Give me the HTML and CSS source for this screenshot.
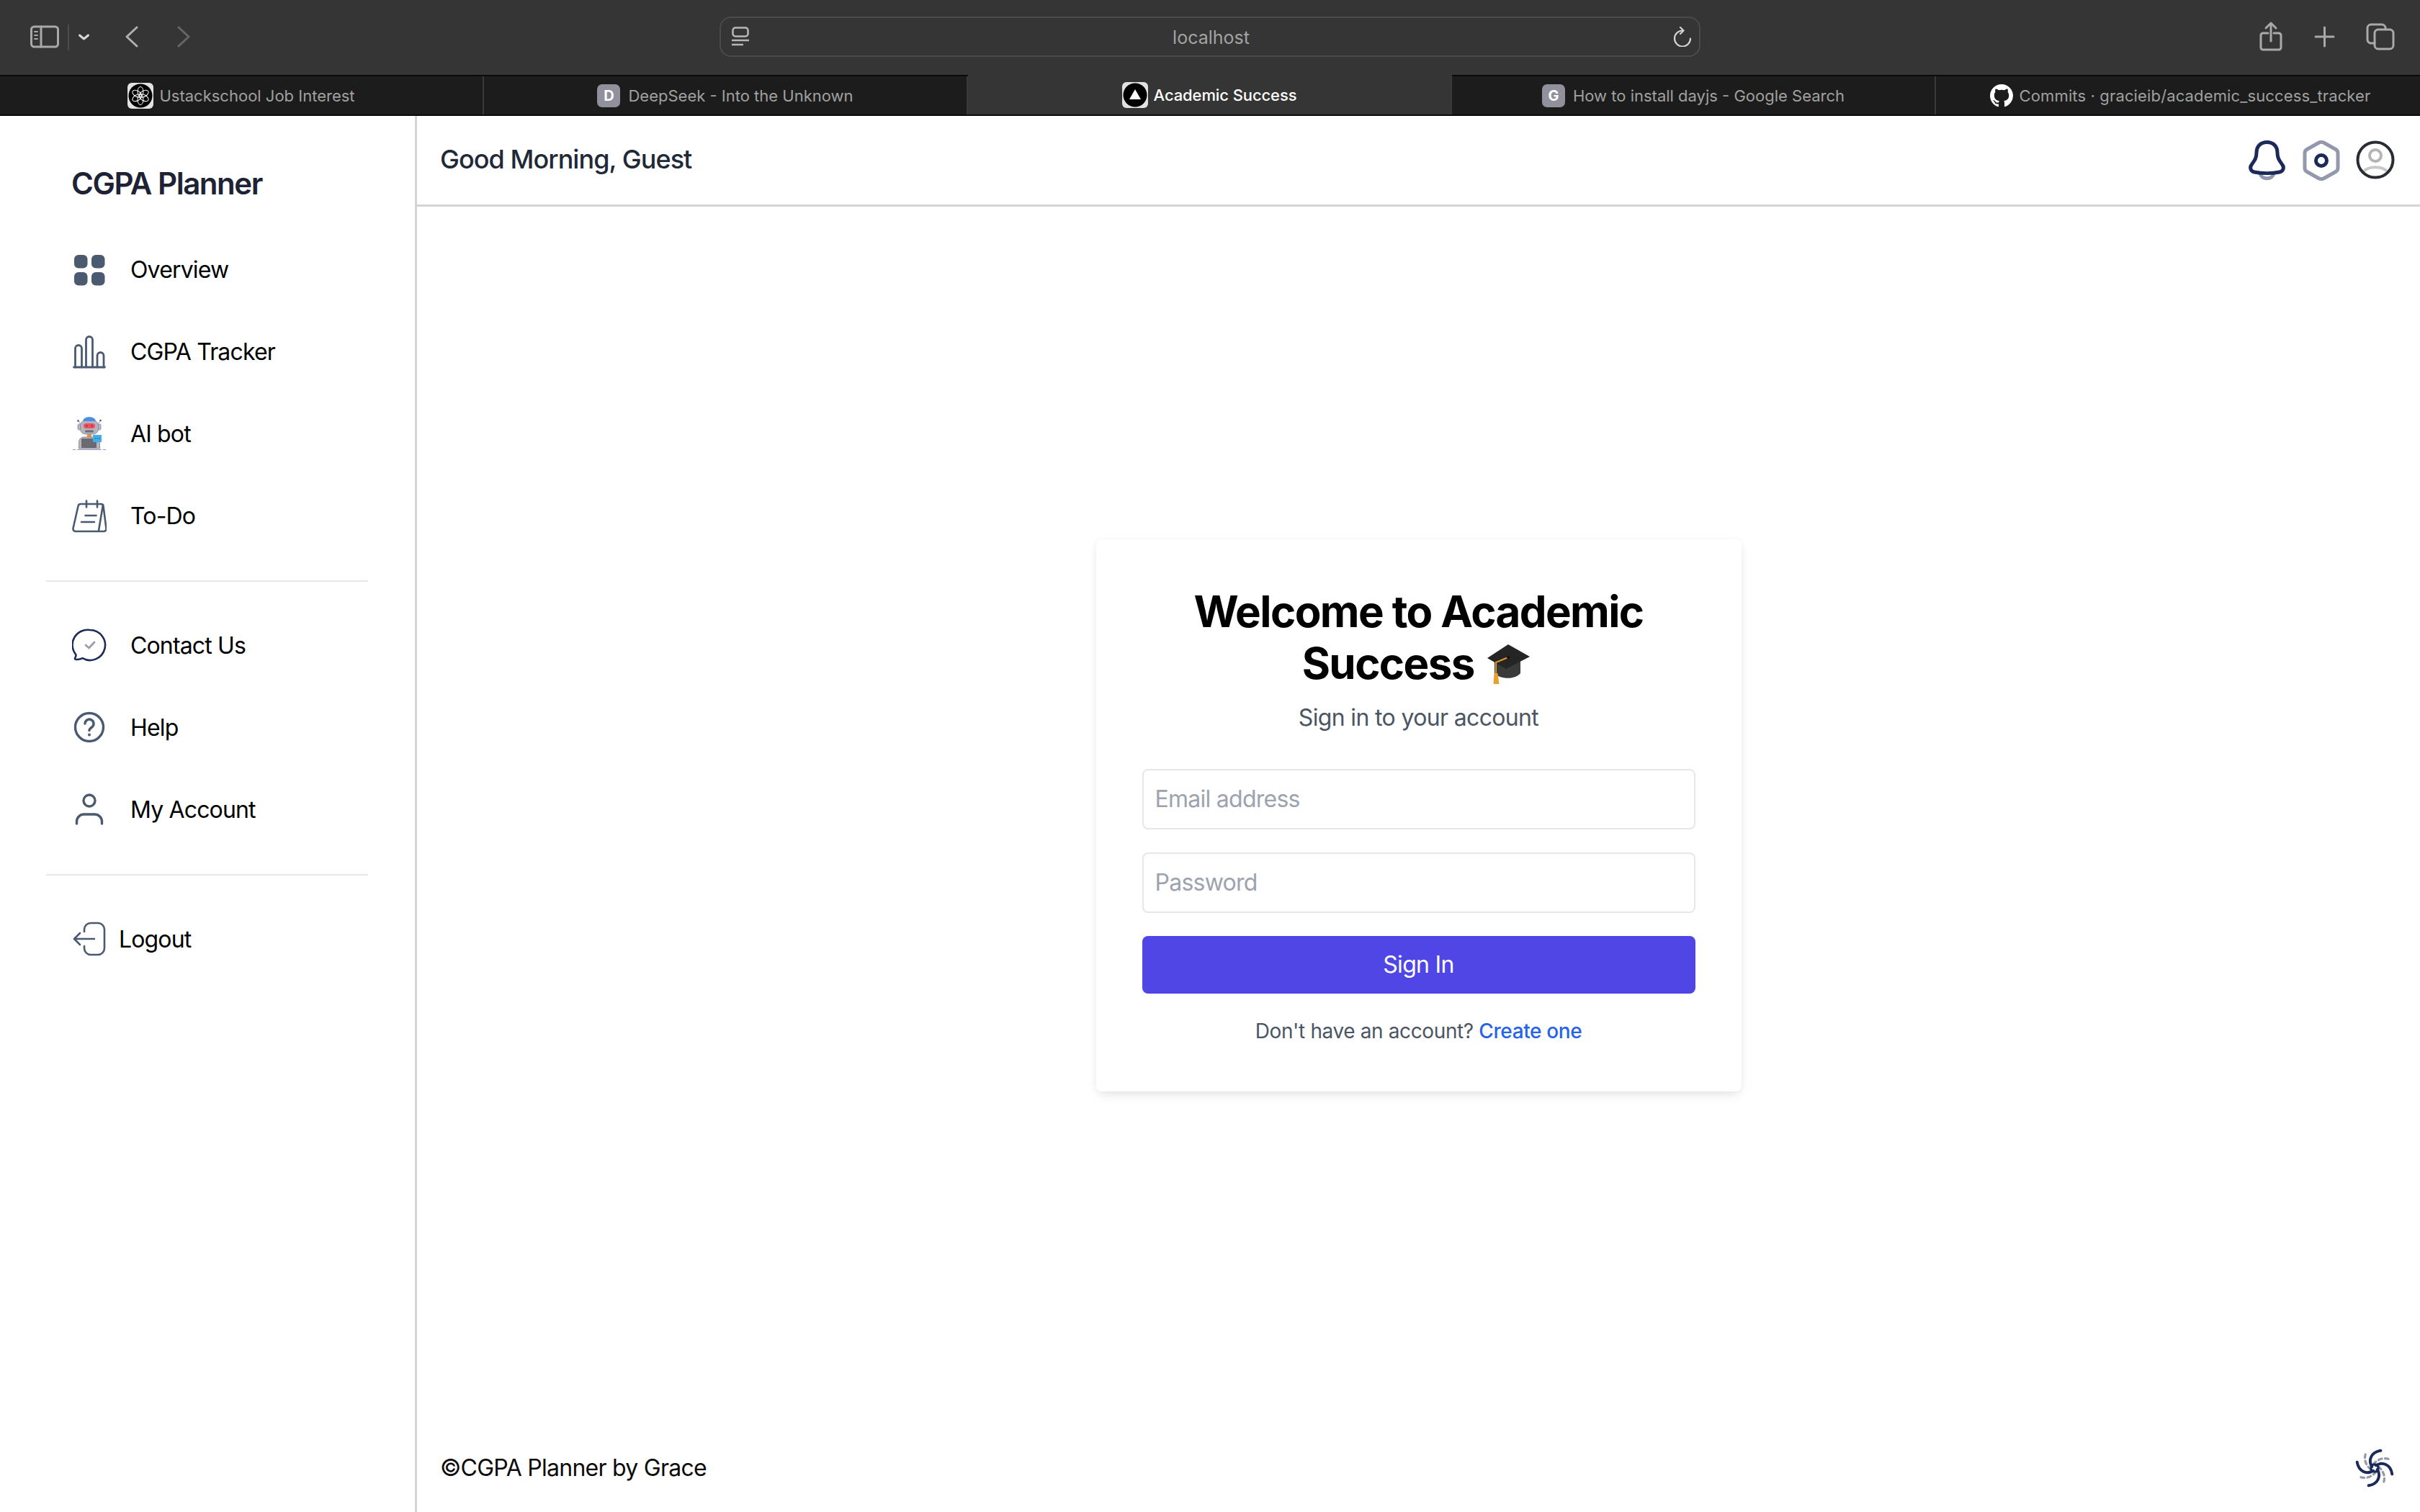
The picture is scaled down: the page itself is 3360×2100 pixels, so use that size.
FILE: index.html
```html
<!DOCTYPE html>
<html lang="en">
<head>
<meta charset="utf-8">
<title>Academic Success</title>
<link rel="stylesheet" href="styles.css">
</head>
<body>
<div class="window">
  <div class="toolbar">
    <svg class="tb-left" viewBox="0 0 280 104" fill="none" stroke-linecap="round" stroke-linejoin="round">
      <rect x="43.5" y="37" width="37" height="28" rx="4" stroke="#a9a9a9" stroke-width="3"/>
      <path d="M57 37v28" stroke="#a9a9a9" stroke-width="3"/>
      <path d="M48 44h4M48 49h4M48 54h4" stroke="#a9a9a9" stroke-width="2"/>
      <path d="M95 34v36" stroke="#4c4c4c" stroke-width="2" stroke-linecap="butt"/>
      <path d="M110.500 49l6 5 6-5" stroke="#d8d8d8" stroke-width="3"/>
      <path d="M190 38l-14 13 14 13" stroke="#b0b0b0" stroke-width="3"/>
      <path d="M248 38l14 13-14 13" stroke="#666" stroke-width="3"/>
    </svg>
    <div class="address">
      <svg class="site-icon" viewBox="0 0 24 28" fill="none" stroke="#b8b8b8" stroke-width="2.500">
        <rect x="1.500" y="1.500" width="21" height="12" rx="3.500"/>
        <path d="M0 19h24M0 25h16"/>
      </svg>
      <span class="url">localhost</span>
      <svg class="reload" viewBox="0 0 26 28" fill="none" stroke="#d4d4d4" stroke-width="2.200" stroke-linecap="round" stroke-linejoin="round">
        <path d="M13 5.500A11 11 0 1 0 24 16.500"/>
        <path d="M10 1l4.500 4.500-4.500 4.500"/>
      </svg>
    </div>
    <svg class="tb-right" viewBox="0 0 240 104" fill="none" stroke="#a9a9a9" stroke-width="3" stroke-linecap="round" stroke-linejoin="round">
      <path d="M29 46h-7a3 3 0 0 0-3 3v17a3 3 0 0 0 3 3h22a3 3 0 0 0 3-3V49a3 3 0 0 0-3-3h-7"/>
      <path d="M33 57V33M26 39l7-7 7 7"/>
      <path d="M107.500 38v26M95 51h25" stroke-width="3"/>
      <rect x="177" y="41" width="26" height="27" rx="5"/>
      <path d="M177 60h-4a5 5 0 0 1-6-5V39a5 5 0 0 1 5-5h15a5 5 0 0 1 5 5"/>
    </svg>
  </div>

  <div class="tabs">
    <div class="tab">
      <svg class="fav" viewBox="0 0 36 36" fill="none">
        <rect width="36" height="36" rx="6" fill="#e2e2e2"/>
        <circle cx="18" cy="18" r="16.500" fill="#000"/>
        <g stroke="#fff" stroke-width="1">
          <ellipse cx="18" cy="12.500" rx="4" ry="7" transform="rotate(0 18 18)"/>
          <ellipse cx="18" cy="12.500" rx="4" ry="7" transform="rotate(60 18 18)"/>
          <ellipse cx="18" cy="12.500" rx="4" ry="7" transform="rotate(120 18 18)"/>
          <ellipse cx="18" cy="12.500" rx="4" ry="7" transform="rotate(180 18 18)"/>
          <ellipse cx="18" cy="12.500" rx="4" ry="7" transform="rotate(240 18 18)"/>
          <ellipse cx="18" cy="12.500" rx="4" ry="7" transform="rotate(300 18 18)"/>
        </g>
      </svg>
      <span>Ustackschool Job Interest</span>
    </div>
    <div class="tab">
      <span class="letter">D</span>
      <span>DeepSeek - Into the Unknown</span>
    </div>
    <div class="tab active">
      <svg class="fav" viewBox="0 0 36 36">
        <rect width="36" height="36" rx="6" fill="#e2e2e2"/>
        <circle cx="18" cy="18" r="16.500" fill="#000"/>
        <path d="M18 10l8 14H10z" fill="#fff"/>
      </svg>
      <span>Academic Success</span>
    </div>
    <div class="tab">
      <span class="letter">G</span>
      <span>How to install dayjs - Google Search</span>
    </div>
    <div class="tab">
      <svg class="fav-gh" viewBox="0 0 16 16"><path fill="#fff" d="M8 0C3.580 0 0 3.580 0 8c0 3.540 2.290 6.530 5.470 7.590.4.070.55-.17.55-.38 0-.19-.01-.82-.01-1.490-2.010.37-2.530-.49-2.690-.94-.09-.23-.48-.94-.82-1.130-.28-.15-.68-.52-.01-.53.63-.01 1.080.58 1.230.82.72 1.210 1.870.87 2.330.66.070-.52.28-.87.51-1.070-1.780-.2-3.640-.89-3.640-3.950 0-.87.31-1.590.82-2.150-.08-.2-.36-1.020.08-2.120 0 0 .67-.21 2.200.82.64-.18 1.320-.27 2-.27.68 0 1.360.09 2 .27 1.530-1.040 2.200-.82 2.200-.82.44 1.100.16 1.920.08 2.120.51.56.82 1.270.82 2.150 0 3.070-1.870 3.750-3.650 3.950.29.25.54.73.54 1.480 0 1.070-.01 1.930-.01 2.200 0 .21.15.46.55.38A8.013 8.013 0 0 0 16 8c0-4.420-3.580-8-8-8z"/></svg>
      <span class="wide">Commits · gracieib/academic_success_tracker</span>
    </div>
  </div>

  <div class="app">
    <aside class="sidebar">
      <div class="brand">CGPA Planner</div>
      <nav class="nav">
        <a class="item">
          <svg class="icon" viewBox="0 0 48 48" fill="#4a5a70">
            <rect x="3" y="4" width="18.500" height="18.500" rx="6"/>
            <rect x="27" y="4" width="18.500" height="18.500" rx="6"/>
            <rect x="3" y="28" width="18.500" height="18.500" rx="6"/>
            <rect x="27" y="28" width="18.500" height="18.500" rx="6"/>
          </svg>
          <span>Overview</span>
        </a>
        <a class="item">
          <svg class="icon" viewBox="0 0 48 48" fill="none" stroke="#4a5a70" stroke-width="2.800" stroke-linecap="round" stroke-linejoin="round">
            <path d="M4.500 46V20a4.500 4.500 0 0 1 9 0v26"/>
            <path d="M19.500 46V8a4.500 4.500 0 0 1 9 0v38"/>
            <path d="M35 46V30a4.500 4.500 0 0 1 9 0v16"/>
            <path d="M2.500 46h43"/>
          </svg>
          <span>CGPA Tracker</span>
        </a>
        <a class="item">
          <svg class="icon" viewBox="0 0 48 48">
            <rect x="8" y="11" width="5" height="8" rx="2" fill="#b9b9c2" stroke="#7d7a9c" stroke-width=".7"/>
            <rect x="35" y="11" width="5" height="8" rx="2" fill="#b9b9c2" stroke="#7d7a9c" stroke-width=".7"/>
            <circle cx="8.500" cy="6.500" r="1.200" fill="#3b3b78"/>
            <circle cx="39.500" cy="6" r="1.200" fill="#3b3b78"/>
            <path d="M9 7l3 4M39 7l-3 4" stroke="#7d7a9c" stroke-width=".7"/>
            <rect x="21" y="24" width="6" height="6" fill="#f2952c"/>
            <path d="M9.500 45V36a7 7 0 0 1 7-7h15a7 7 0 0 1 7 7v9z" fill="#b7b7bd" stroke="#7d7a9c" stroke-width=".8"/>
            <rect x="13" y="31" width="21" height="13" rx="1" fill="#6a6a70"/>
            <rect x="11.500" y="6" width="25" height="19" rx="7" fill="#b4b4ba" stroke="#7d7a9c" stroke-width=".7"/>
            <path d="M15 7a9 6 0 0 1 18 0z" fill="#4a8fe0"/>
            <rect x="16" y="10" width="16" height="7" rx="3.500" fill="#ef4f66"/>
            <circle cx="20.500" cy="13.500" r="1" fill="#702030"/>
            <circle cx="27.500" cy="13.500" r="1" fill="#702030"/>
            <rect x="18" y="19.500" width="12" height="3" rx="1.500" fill="#6c6c74"/>
            <path d="M29 26h12v10h-5l-2 2-1-2h-4z" fill="#43aee8"/>
            <path d="M31.500 31h1.500M34.500 31h1.500M37.500 31h1.500" stroke="#234a80" stroke-width="1.200"/>
            <path d="M1 46.500h4M7 46.500h34M43 46.500h4" stroke="#9a98b8" stroke-width="1"/>
          </svg>
          <span>AI bot</span>
        </a>
        <a class="item">
          <svg class="icon" viewBox="0 0 48 48" fill="none" stroke="#4a5a70" stroke-width="2.600" stroke-linecap="round" stroke-linejoin="round">
            <path d="M12 8h28a3.500 3.500 0 0 1 3.500 3l4 31a3.500 3.500 0 0 1-3.500 4H5a3.500 3.500 0 0 1-3.500-4l7-31A3.500 3.500 0 0 1 12 8z"/>
            <path d="M43 9l-6 36"/>
            <path d="M20 3.500v9M35 3.500v9"/>
            <path d="M18.500 24h15M13 33h18"/>
          </svg>
          <span>To-Do</span>
        </a>
      </nav>
      <hr class="rule">
      <nav class="nav">
        <a class="item">
          <svg class="icon" viewBox="0 0 48 48" fill="none" stroke-linecap="round" stroke-linejoin="round">
            <path d="M25 3a21 21 0 1 1-10.500 39.200c-2.500 1.300-6 2-9 1.800-1.500-.2-1.900-1.400-1.100-2.600.9-1.400 1.300-3 .8-4.500A21 21 0 0 1 25 3z" stroke="#1c2b57" stroke-width="2.600"/>
            <path d="M19 24l4.500 4L31 20" stroke="#9a9db2" stroke-width="2.800"/>
          </svg>
          <span>Contact Us</span>
        </a>
        <a class="item">
          <svg class="icon" viewBox="0 0 48 48" fill="none" stroke="#4a5a70" stroke-linecap="round">
            <circle cx="24" cy="24" r="19.500" stroke-width="3.400"/>
            <path d="M18 19a6 6 0 1 1 9.500 5c-2.200 1.500-3.500 2.500-3.500 4.500" stroke-width="3.400"/>
            <circle cx="24" cy="34.500" r="2" fill="#4a5a70" stroke="none"/>
          </svg>
          <span>Help</span>
        </a>
        <a class="item">
          <svg class="icon" viewBox="0 0 48 48" fill="none" stroke="#4a5a70" stroke-width="3.400" stroke-linecap="round">
            <circle cx="24" cy="12" r="8"/>
            <path d="M6.500 44v-3a10 10 0 0 1 10-10h15a10 10 0 0 1 10 10v3"/>
          </svg>
          <span>My Account</span>
        </a>
      </nav>
      <hr class="rule">
      <nav class="nav">
        <a class="item logout">
          <svg class="icon" viewBox="0 0 48 48" fill="none" stroke="#4a5a70" stroke-width="2.600" stroke-linecap="round" stroke-linejoin="round">
            <path d="M17 14v-3a9 9 0 0 1 9-9h10a9 9 0 0 1 9 9v26a9 9 0 0 1-9 9H26a9 9 0 0 1-9-9v-3"/>
            <path d="M31 24H3M11 16l-8 8 8 8"/>
          </svg>
          <span>Logout</span>
        </a>
      </nav>
    </aside>

    <main class="main">
      <header class="topbar">
        <div class="greeting">Good Morning, Guest</div>
        <div class="top-icons">
          <svg class="top-icon" viewBox="0 0 56 56" fill="none" stroke-linecap="round" stroke-linejoin="round">
            <path d="M18 46c2 9 17 9 19 0" stroke="#9397ad" stroke-width="5"/>
            <path d="M27.500 2.500C36 2.500 42 8 42 17c0 8 3 11 7 17 2.800 4 1 9-4 10-10 2-25 2-35 0-5-1-6.800-6-4-10 4-6 7-9 7-17C13 8 19 2.500 27.500 2.500z" stroke="#1b2a58" stroke-width="5"/>
          </svg>
          <svg class="top-icon" viewBox="0 0 56 56" fill="none" stroke-linecap="round" stroke-linejoin="round">
            <path d="M24 3.500a8 8 0 0 1 8 0l16 9a6 6 0 0 1 3 5v21a6 6 0 0 1-3 5l-16 9a8 8 0 0 1-8 0l-16-9a6 6 0 0 1-3-5v-21a6 6 0 0 1 3-5z" stroke="#9398ad" stroke-width="5"/>
            <circle cx="28" cy="28" r="7.500" stroke="#1b2a58" stroke-width="5"/>
          </svg>
          <svg class="top-icon" viewBox="0 0 56 56" fill="none" stroke-linecap="round">
            <circle cx="28" cy="21" r="8" stroke="#b5b5b5" stroke-width="4"/>
            <path d="M11 44c7-9 27-9 34 0" stroke="#c8c8c8" stroke-width="4"/>
            <circle cx="28" cy="27" r="24.500" stroke="#2a2c33" stroke-width="4"/>
          </svg>
        </div>
      </header>

      <section class="content">
        <div class="card">
          <h1 class="title">Welcome to Academic Success
            <svg class="cap" viewBox="0 0 60 58">
              <path d="M10 26v16c6 8 28 10 36 0V26z" fill="#3a3a3a"/>
              <path d="M29 2l30 17-33 17L0 21z" fill="#252525"/>
              <path d="M29 20L12 27v18" fill="none" stroke="#e0962a" stroke-width="2"/>
              <path d="M9.500 42h5l2 15h-8z" fill="#e8a032"/>
              <circle cx="29" cy="20" r="2" fill="#111"/>
            </svg>
          </h1>
          <p class="sub">Sign in to your account</p>
          <form class="form">
            <input class="field" type="email" placeholder="Email address">
            <input class="field" type="password" placeholder="Password">
            <button class="submit" type="button">Sign In</button>
          </form>
          <p class="switch">Don't have an account? <a class="link">Create one</a></p>
        </div>
      </section>

      <footer class="footer">
        <div>©CGPA Planner by Grace</div>
        <svg class="swirl" viewBox="-30 -30 60 60" fill="none" stroke-linecap="round">
          <g stroke="#9398ad" stroke-width="3.500" stroke-dasharray="5 5">
            <path d="M-6 2C-14-6-17-14-12-25"/>
            <path d="M-6 2C-14-6-17-14-12-25" transform="rotate(90)"/>
            <path d="M-6 2C-14-6-17-14-12-25" transform="rotate(180)"/>
            <path d="M-6 2C-14-6-17-14-12-25" transform="rotate(270)"/>
          </g>
          <g stroke="#1b2a58" stroke-width="4.200">
            <circle r="5.500" stroke-width="3.500"/>
            <path d="M-4-2C-10-12-5-24 9-26"/>
            <path d="M-4-2C-10-12-5-24 9-26" transform="rotate(90)"/>
            <path d="M-4-2C-10-12-5-24 9-26" transform="rotate(180)"/>
            <path d="M-4-2C-10-12-5-24 9-26" transform="rotate(270)"/>
          </g>
        </svg>
      </footer>
    </main>
  </div>
</div>
</body>
</html>
```
FILE: styles.css
```css
* { box-sizing: border-box; }

html, body {
  margin: 0;
  height: 100%;
}

body {
  font-family: Inter, "Noto Sans", "Liberation Sans", sans-serif;
  background: #fff;
  color: #000;
  overflow: hidden;
}

.window {
  height: 2100px;
  display: flex;
  flex-direction: column;
}

/* Browser toolbar */
.toolbar {
  height: 104px;
  flex: none;
  background: #353535;
  display: grid;
  grid-template-columns: 1fr 1362px 1fr;
  align-items: center;
}

.tb-left { width: 280px; height: 104px; }
.tb-right { width: 240px; height: 104px; justify-self: end; }

.address {
  height: 56px;
  margin-top: -2px;
  border: 2px solid #4a4a4a;
  border-radius: 16px;
  background: #353535;
  display: flex;
  align-items: center;
  justify-content: space-between;
  padding: 0 10px 0 15px;
}

.site-icon { width: 24px; height: 28px; }
.reload { width: 26px; height: 28px; }

.url {
  flex: 1;
  text-align: center;
  font-size: 25px;
  line-height: 32px;
  padding-top: 2px;
  color: #a3a3a3;
}

/* Tabs */
.tabs {
  height: 57px;
  flex: none;
  display: grid;
  grid-template-columns: repeat(5, 1fr);
  background: #1c1c1c;
  border-top: 2px solid #0a0a0a;
  border-bottom: 2px solid #0a0a0a;
}

.tab {
  display: flex;
  align-items: center;
  justify-content: center;
  gap: 8px;
  font-size: 22px;
  color: #a0a0a0;
  border-right: 2px solid #3a3a3a;
  white-space: nowrap;
}

.tab:last-child {
  border-right: 0;
  padding-left: 6px;
}

.tab .wide { letter-spacing: .14px; }

.tab.active {
  background: #353535;
  color: #fff;
  font-weight: 500;
  margin-top: -2px;
  letter-spacing: -.1px;
}

.fav { width: 36px; height: 36px; flex: none; }
.fav-gh { width: 32px; height: 32px; flex: none; margin-right: 1px; }

.letter {
  width: 32px;
  height: 32px;
  flex: none;
  margin-right: 3px;
  border-radius: 7px;
  background: #90919d;
  color: #fff;
  font-size: 20px;
  font-weight: 700;
  display: flex;
  align-items: center;
  justify-content: center;
}

/* App */
.app {
  flex: 1;
  min-height: 0;
  display: flex;
}

.sidebar {
  width: 579px;
  flex: none;
  background: #fff;
  border-right: 3px solid #d4d4d4;
  padding: 0 65px 0 64px;
}

.brand {
  padding: 70px 0 38px 35px;
  font-size: 42px;
  line-height: 48px;
  font-weight: 600;
  letter-spacing: -1.45px;
  color: #1e2235;
}

.nav {
  display: flex;
  flex-direction: column;
}

.item {
  height: 114px;
  display: flex;
  align-items: center;
  gap: 33px;
  padding-left: 36px;
  font-size: 32px;
  letter-spacing: -.85px;
  color: #000;
}

.item.logout { gap: 17px; }

.icon { width: 48px; height: 48px; flex: none; }

.rule {
  height: 2px;
  border: 0;
  background: #e5e7eb;
  margin: 33px 0 31px;
}

/* Main */
.main {
  flex: 1;
  min-width: 0;
  display: flex;
  flex-direction: column;
}

.topbar {
  height: 126px;
  flex: none;
  border-bottom: 3px solid #d4d4d4;
  padding: 0 34px 0 32px;
  display: flex;
  align-items: center;
  justify-content: space-between;
}

.greeting {
  font-size: 36px;
  font-weight: 500;
  letter-spacing: -.95px;
  color: #1f2937;
  margin-bottom: 3px;
}

.top-icons {
  display: flex;
  gap: 19px;
}

.top-icon { width: 56px; height: 56px; }

.content {
  flex: 1;
  min-height: 0;
  display: flex;
  align-items: center;
  justify-content: center;
}

.card {
  width: 896px;
  padding: 64px;
  background: #fff;
  border-radius: 8px;
  box-shadow: 0 8px 16px -4px rgba(0, 0, 0, .1), 0 0 10px rgba(0, 0, 0, .05);
  text-align: center;
}

.title {
  margin: 0;
  font-size: 60px;
  line-height: 72px;
  font-weight: 700;
  letter-spacing: -1.6px;
  color: #000;
}

.cap {
  width: 60px;
  height: 58px;
  margin: 0 6px;
  vertical-align: -8px;
}

.sub {
  margin: 16px 0 0;
  font-size: 32px;
  line-height: 48px;
  letter-spacing: -.65px;
  color: #4b5563;
}

.form {
  margin-top: 47px;
  display: flex;
  flex-direction: column;
  gap: 32px;
}

.field {
  height: 84px;
  width: 100%;
  padding: 0 16px;
  border: 2px solid #e5e7eb;
  border-radius: 8px;
  background: #fff;
  font: 400 32px Inter, "Noto Sans", sans-serif;
  letter-spacing: -.74px;
  color: #111827;
  outline: none;
}

.field::placeholder { color: #9ca3af; opacity: 1; }

.submit {
  height: 80px;
  border: 0;
  border-radius: 8px;
  background: #4f46e5;
  color: #fff;
  font: 400 32px Inter, "Noto Sans", sans-serif;
  letter-spacing: -.7px;
}

.switch {
  margin: 32px 0 0;
  font-size: 28px;
  line-height: 40px;
  letter-spacing: -.38px;
  color: #4b5563;
}

.link {
  color: #2563eb;
  font-weight: 500;
}

/* Footer */
.footer {
  height: 123px;
  flex: none;
  padding: 0 35px 0 32px;
  display: flex;
  align-items: center;
  justify-content: space-between;
  font-size: 32px;
  letter-spacing: -.73px;
  color: #0b0b0b;
}

.swirl { width: 56px; height: 56px; }
```
